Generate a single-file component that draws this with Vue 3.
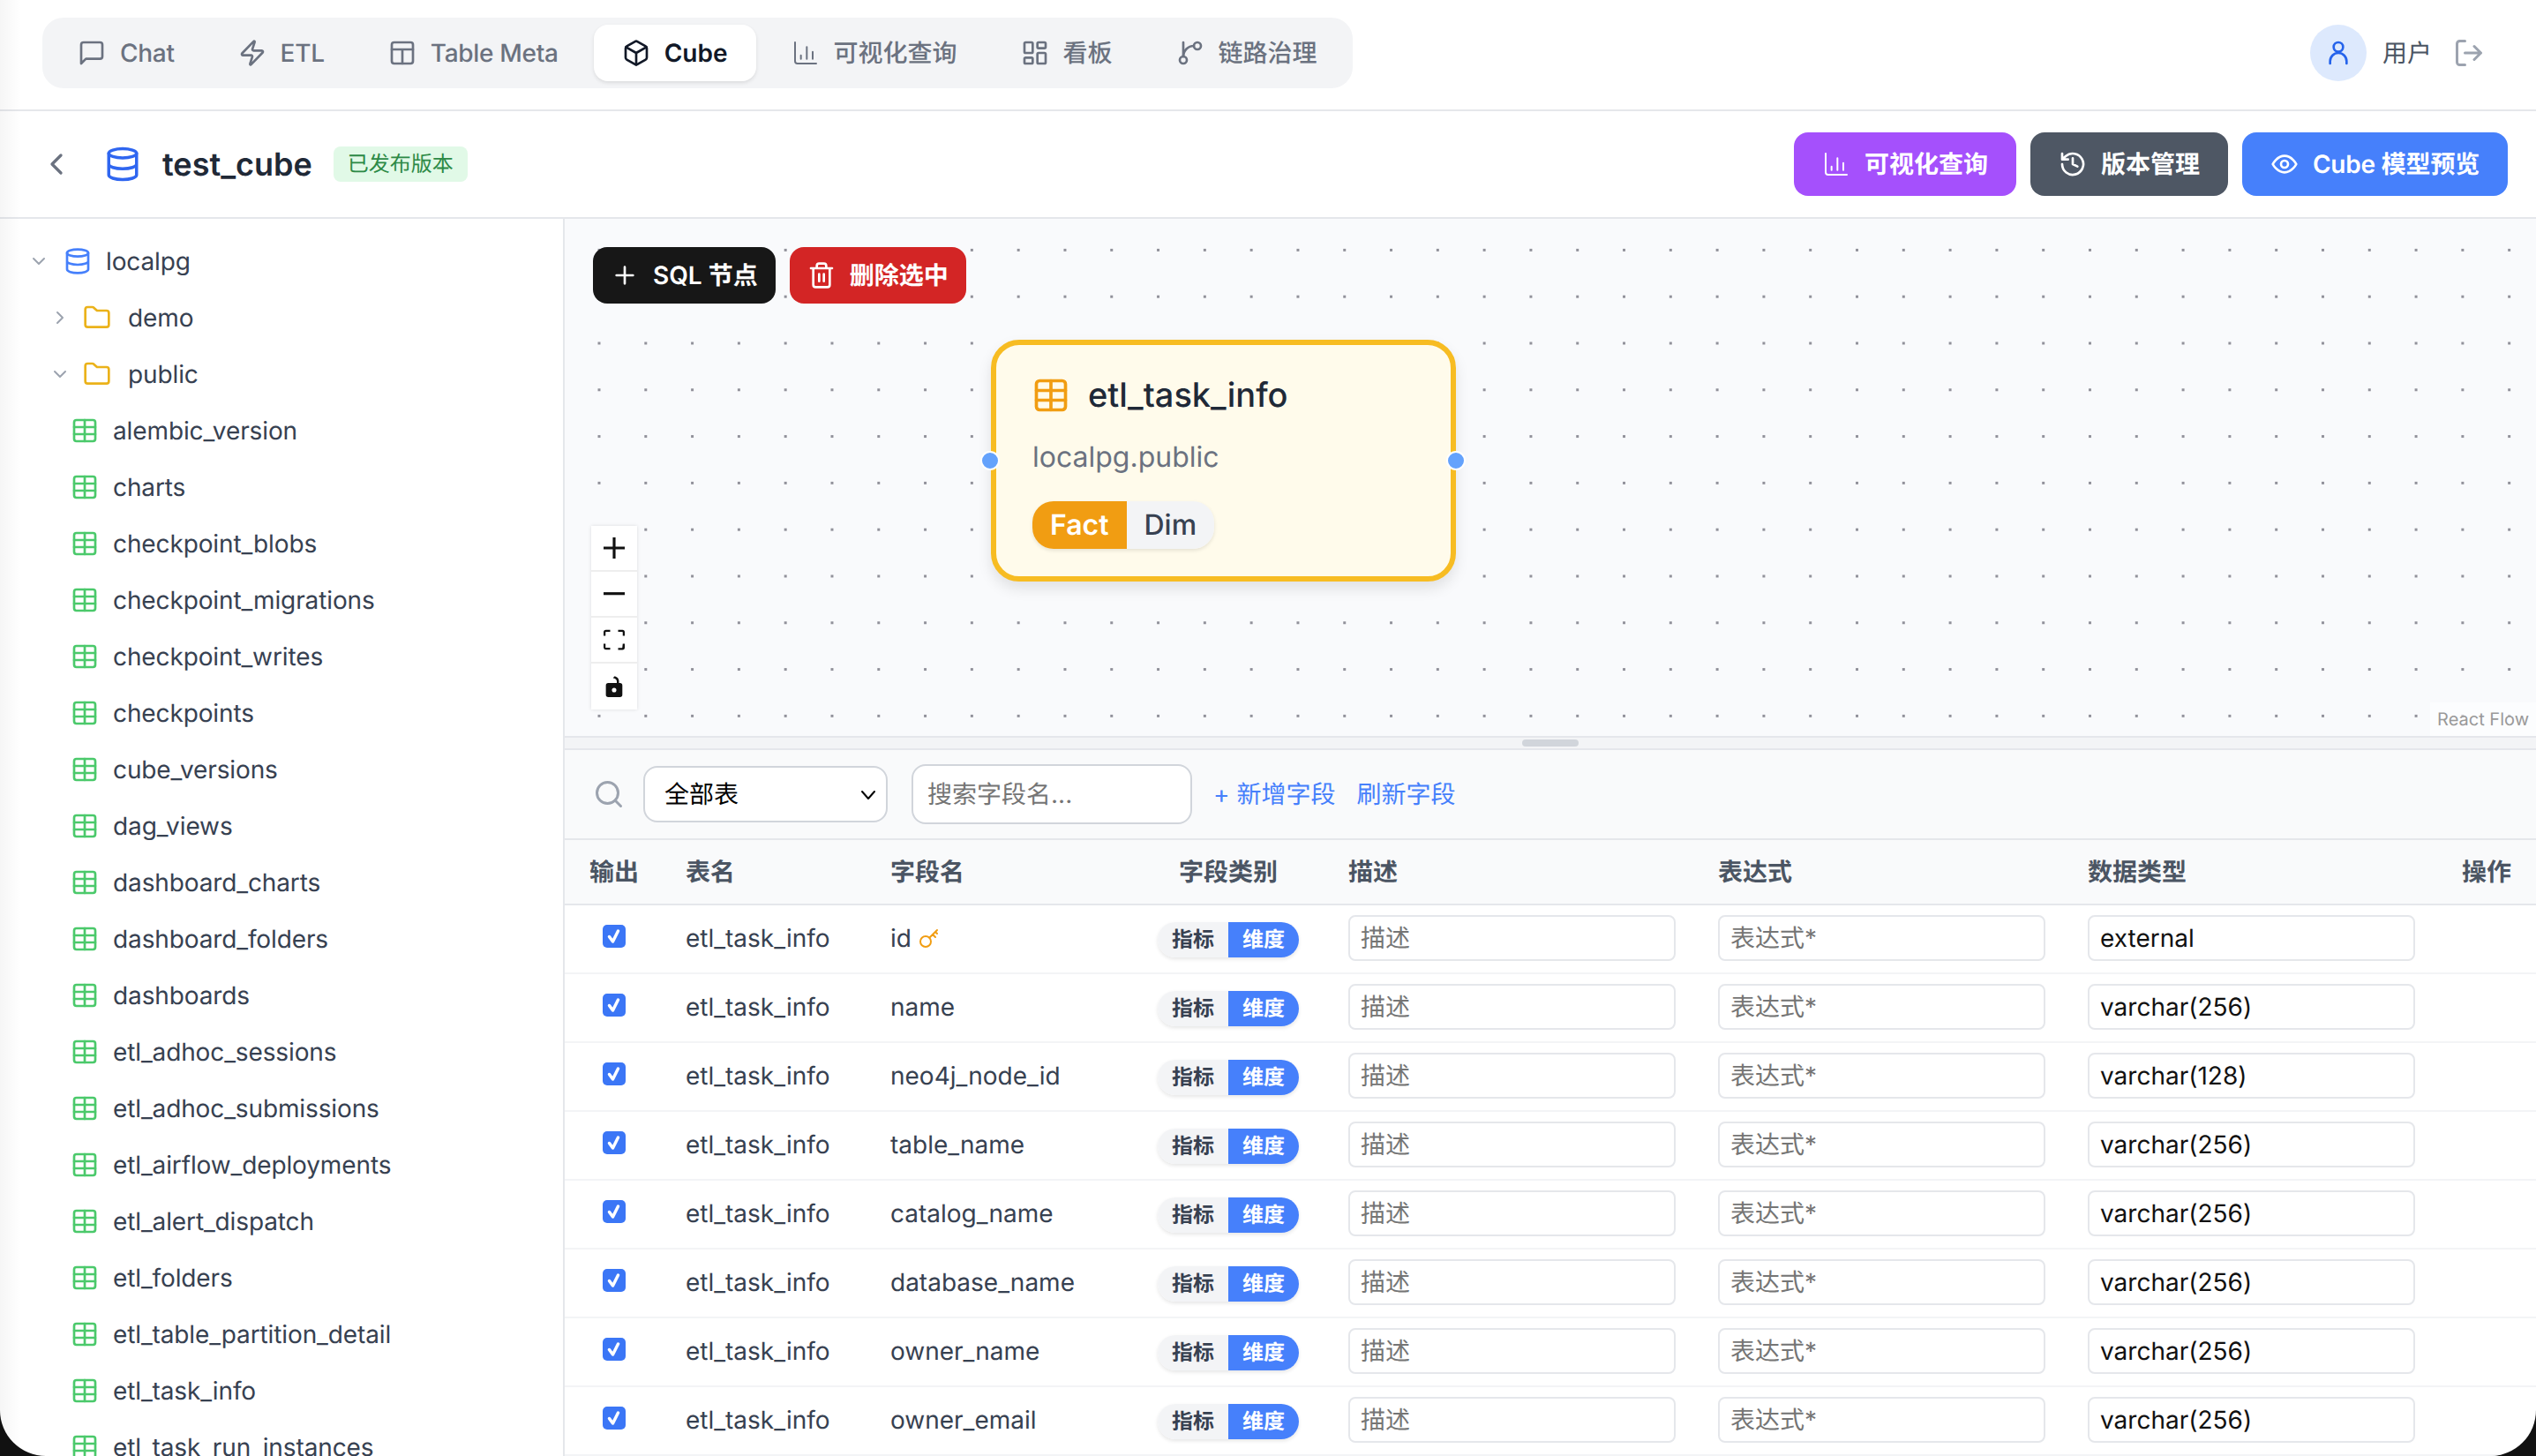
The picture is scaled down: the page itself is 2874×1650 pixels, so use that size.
<script setup>
const tabs = [
  { name: 'Chat', icon: 'chat', latin: true },
  { name: 'ETL', icon: 'bolt', latin: true },
  { name: 'Table Meta', icon: 'layout', latin: true },
  { name: 'Cube', icon: 'cube', active: true },
  { name: '可视化查询', icon: 'chart' },
  { name: '看板', icon: 'grid' },
  { name: '链路治理', icon: 'branch' }
]

const tables = [
  'alembic_version', 'charts', 'checkpoint_blobs', 'checkpoint_migrations', 'checkpoint_writes',
  'checkpoints', 'cube_versions', 'dag_views', 'dashboard_charts', 'dashboard_folders', 'dashboards',
  'etl_adhoc_sessions', 'etl_adhoc_submissions', 'etl_airflow_deployments', 'etl_alert_dispatch',
  'etl_folders', 'etl_table_partition_detail', 'etl_task_info', 'etl_task_run_instances'
]

const fields = [
  { name: 'id', type: 'external', key: true },
  { name: 'name', type: 'varchar(256)' },
  { name: 'neo4j_node_id', type: 'varchar(128)' },
  { name: 'table_name', type: 'varchar(256)' },
  { name: 'catalog_name', type: 'varchar(256)' },
  { name: 'database_name', type: 'varchar(256)' },
  { name: 'owner_name', type: 'varchar(256)' },
  { name: 'owner_email', type: 'varchar(256)' }
]
</script>

<template>
  <div class="window">
    <i class="edge"></i>
    <header class="topbar">
      <nav class="tabs">
        <div v-for="tab in tabs" :key="tab.name" class="tab" :class="{ active: tab.active, latin: tab.latin }">
          <svg class="ico" viewBox="0 0 24 24">
            <path v-if="tab.icon === 'chat'" d="M21 15a2 2 0 0 1-2 2H7l-4 4V5a2 2 0 0 1 2-2h14a2 2 0 0 1 2 2z" />
            <path v-if="tab.icon === 'bolt'" d="M4 14a1 1 0 0 1-.78-1.63l9.9-10.2a.5.5 0 0 1 .86.46l-1.92 6.02A1 1 0 0 0 13 10h7a1 1 0 0 1 .78 1.63l-9.9 10.2a.5.5 0 0 1-.86-.46l1.92-6.02A1 1 0 0 0 11 14z" />
            <g v-if="tab.icon === 'layout'">
              <rect x="3" y="3" width="18" height="18" rx="2" />
              <path d="M3 9h18M12 9v12" />
            </g>
            <g v-if="tab.icon === 'cube'">
              <path d="M21 16V8a2 2 0 0 0-1-1.7l-7-4a2 2 0 0 0-2 0l-7 4A2 2 0 0 0 3 8v8a2 2 0 0 0 1 1.7l7 4a2 2 0 0 0 2 0l7-4a2 2 0 0 0 1-1.7z" />
              <path d="M3.3 7 12 12l8.7-5M12 22V12" />
            </g>
            <path v-if="tab.icon === 'chart'" class="thin" d="M3 3v16a2 2 0 0 0 2 2h16M8 17v-3M13 17V7M18 17V11" />
            <g v-if="tab.icon === 'grid'">
              <rect x="3" y="3" width="7" height="9" rx="1" />
              <rect x="14" y="3" width="7" height="5" rx="1" />
              <rect x="14" y="12" width="7" height="9" rx="1" />
              <rect x="3" y="16" width="7" height="5" rx="1" />
            </g>
            <g v-if="tab.icon === 'branch'">
              <path d="M6 3v12" />
              <circle cx="18" cy="6" r="3" />
              <circle cx="6" cy="18" r="3" />
              <path d="M15 6a9 9 0 0 0-9 9" />
            </g>
          </svg>
          <span>{{ tab.name }}</span>
        </div>
      </nav>
      <div class="user">
        <span class="avatar">
          <svg viewBox="0 0 24 24"><circle cx="12" cy="7" r="4" /><path d="M5 21v-2a7 7 0 0 1 14 0v2" /></svg>
        </span>
        <span class="user-name">用户</span>
        <svg class="logout" viewBox="0 0 24 24"><path d="M9 21H5a2 2 0 0 1-2-2V5a2 2 0 0 1 2-2h4M16 17l5-5-5-5M21 12H9" /></svg>
      </div>
    </header>

    <div class="titlebar">
      <svg class="back" viewBox="0 0 24 24"><path d="m15 18-6-6 6-6" /></svg>
      <svg class="title-db" viewBox="0 0 24 24">
        <ellipse cx="12" cy="5" rx="9" ry="3" />
        <path d="M3 5v14c0 1.7 4 3 9 3s9-1.3 9-3V5M3 12c0 1.7 4 3 9 3s9-1.3 9-3" />
      </svg>
      <h1>test_cube</h1>
      <span class="badge">已发布版本</span>
      <div class="actions">
        <button class="act purple">
          <svg class="ico" viewBox="0 0 24 24"><path class="thin" d="M3 3v16a2 2 0 0 0 2 2h16M8 17v-3M13 17V7M18 17V11" /></svg>
          可视化查询
        </button>
        <button class="act slate">
          <svg class="ico" viewBox="0 0 24 24"><path d="M3 12a9 9 0 1 0 3-6.7L3 8M3 3v5h5M12 7v5l4 2" /></svg>
          版本管理
        </button>
        <button class="act blue">
          <svg class="ico" viewBox="0 0 24 24"><path d="M2 12s3.6-7 10-7 10 7 10 7-3.6 7-10 7-10-7-10-7z" /><circle cx="12" cy="12" r="3" /></svg>
          Cube 模型预览
        </button>
      </div>
    </div>

    <div class="body">
      <aside class="tree">
        <div class="row lvl0">
          <svg class="caret" viewBox="0 0 24 24"><path d="m6 9 6 6 6-6" /></svg>
          <svg class="db" viewBox="0 0 24 24">
            <ellipse cx="12" cy="5" rx="9" ry="3" />
            <path d="M3 5v14c0 1.7 4 3 9 3s9-1.3 9-3V5M3 12c0 1.7 4 3 9 3s9-1.3 9-3" />
          </svg>
          <span>localpg</span>
        </div>
        <div class="row lvl1">
          <svg class="caret" viewBox="0 0 24 24"><path d="m9 18 6-6-6-6" /></svg>
          <svg class="folder" viewBox="0 0 24 24"><path d="M20 20a2 2 0 0 0 2-2V8a2 2 0 0 0-2-2h-8L9.600 3.900A2 2 0 0 0 8.100 3H4a2 2 0 0 0-2 2v13a2 2 0 0 0 2 2z" /></svg>
          <span>demo</span>
        </div>
        <div class="row lvl1">
          <svg class="caret" viewBox="0 0 24 24"><path d="m6 9 6 6 6-6" /></svg>
          <svg class="folder" viewBox="0 0 24 24"><path d="M20 20a2 2 0 0 0 2-2V8a2 2 0 0 0-2-2h-8L9.600 3.900A2 2 0 0 0 8.100 3H4a2 2 0 0 0-2 2v13a2 2 0 0 0 2 2z" /></svg>
          <span>public</span>
        </div>
        <div v-for="t in tables" :key="t" class="row lvl2">
          <svg class="tbl" viewBox="0 0 24 24">
            <rect x="3" y="3" width="18" height="18" rx="2" />
            <path d="M3 9h18M3 15h18M12 3v18" />
          </svg>
          <span>{{ t }}</span>
        </div>
      </aside>

      <main class="content">
        <section class="canvas">
          <div class="canvas-tools">
            <button class="tool dark">
              <svg class="ico" viewBox="0 0 24 24"><path d="M5 12h14M12 5v14" /></svg>
              SQL 节点
            </button>
            <button class="tool red">
              <svg class="ico" viewBox="0 0 24 24"><path d="M3 6h18M19 6v14a2 2 0 0 1-2 2H7a2 2 0 0 1-2-2V6M8 6V4a2 2 0 0 1 2-2h4a2 2 0 0 1 2 2v2M10 11v6M14 11v6" /></svg>
              删除选中
            </button>
          </div>

          <div class="node">
            <i class="handle left"></i>
            <i class="handle right"></i>
            <div class="node-title">
              <svg viewBox="0 0 24 24">
                <rect x="3" y="3" width="18" height="18" rx="2" />
                <path d="M3 9h18M3 15h18M12 3v18" />
              </svg>
              etl_task_info
            </div>
            <div class="node-sub">localpg.public</div>
            <div class="node-switch">
              <span class="on">Fact</span>
              <span>Dim</span>
            </div>
          </div>

          <div class="controls">
            <button>
              <svg viewBox="0 0 32 32"><path d="M32 18.100H18.100V32h-4.200V18.100H0v-4.200h13.900V0h4.200v13.900H32z" /></svg>
            </button>
            <button>
              <svg viewBox="0 0 32 5"><path d="M0 0h32v4.200H0z" /></svg>
            </button>
            <button>
              <svg viewBox="0 0 32 30"><path d="M3.700 27.300a1 1 0 0 1-.7-.7V21H0v5.600A3.700 3.700 0 0 0 3.700 30H10v-3H3.700zM28.300 27a1 1 0 0 1-.3.3H22v3h6a3.700 3.700 0 0 0 4-3.700V21h-3zM28 0h-6v3h6a1 1 0 0 1 1 .7V9h3V3.700A3.700 3.700 0 0 0 28 0zM0 3.700V9h3V3.700A1 1 0 0 1 3.700 3H10V0H3.700A3.700 3.700 0 0 0 0 3.700z" /></svg>
            </button>
            <button>
              <svg viewBox="0 0 25 32"><path d="M21.300 10.700h-1.500V7.600c-.1-3.800-3.300-6.900-7.100-6.900l-1.900 2.500c2.900 0 5.300 1.900 5.700 4.500v3H3.600A3.600 3.600 0 0 0 0 14.300v14.100A3.600 3.600 0 0 0 3.600 32h17.700a3.600 3.600 0 0 0 3.600-3.600V14.300a3.600 3.600 0 0 0-3.600-3.600zM12.500 24.700a3.400 3.400 0 1 1 0-6.800 3.400 3.400 0 0 1 0 6.800z" /></svg>
            </button>
          </div>

          <div class="attribution">React Flow</div>
        </section>

        <div class="resizer"><i></i></div>

        <section class="toolbar">
          <svg class="search-ico" viewBox="0 0 24 24"><circle cx="11" cy="11" r="8" /><path d="m21 21-4.300-4.300" /></svg>
          <div class="select">
            <span>全部表</span>
            <svg viewBox="0 0 24 24"><path d="m5 9 7 8 7-8" /></svg>
          </div>
          <input class="search" placeholder="搜索字段名..." />
          <a class="link add">+ 新增字段</a>
          <a class="link">刷新字段</a>
        </section>

        <table class="grid">
          <colgroup>
            <col class="c-out" />
            <col class="c-table" />
            <col class="c-field" />
            <col class="c-kind" />
            <col class="c-input" />
            <col class="c-input" />
            <col class="c-input" />
            <col />
          </colgroup>
          <thead>
            <tr>
              <th>输出</th>
              <th>表名</th>
              <th>字段名</th>
              <th class="center">字段类别</th>
              <th>描述</th>
              <th>表达式</th>
              <th>数据类型</th>
              <th class="right">操作</th>
            </tr>
          </thead>
          <tbody>
            <tr v-for="f in fields" :key="f.name">
              <td>
                <span class="check">
                  <svg viewBox="0 0 26 26"><path d="m7.500 13.500 4 5.500 6-12" /></svg>
                </span>
              </td>
              <td>etl_task_info</td>
              <td>
                <span class="field-name">
                  {{ f.name }}
                  <svg v-if="f.key" class="key" viewBox="0 0 24 24">
                    <circle cx="8" cy="16" r="6" />
                    <path d="M12.500 11.500 21 3M16 8l3 3M19 5l2 2" />
                  </svg>
                </span>
              </td>
              <td class="center">
                <div class="kind">
                  <span>指标</span>
                  <span class="on">维度</span>
                </div>
              </td>
              <td><input class="cell" placeholder="描述" /></td>
              <td><input class="cell" placeholder="表达式*" /></td>
              <td><input class="cell" :value="f.type" /></td>
              <td></td>
            </tr>
          </tbody>
        </table>
      </main>
    </div>
  </div>
</template>

<style>
html, body {
  margin: 0;
  background: #111;
}
</style>

<style scoped>
* {
  box-sizing: border-box;
}
.window {
  width: 2874px;
  height: 1650px;
  overflow: hidden;
  display: flex;
  flex-direction: column;
  position: relative;
  background: #fff;
  border-radius: 0 0 52px 52px;
  font-family: Inter, "Noto Sans CJK SC", sans-serif;
  font-size: 28px;
  line-height: 1.5;
  text-rendering: geometricPrecision;
  color: #374151;
}
.edge {
  position: absolute;
  left: 0;
  top: 0;
  bottom: 0;
  width: 24px;
  background: linear-gradient(90deg, rgba(0, 0, 0, 0.035), transparent);
  pointer-events: none;
}
svg {
  fill: none;
  stroke: currentColor;
  stroke-width: 2;
  stroke-linecap: round;
  stroke-linejoin: round;
  flex-shrink: 0;
}
.ico {
  width: 32px;
  height: 32px;
}
.thin {
  stroke-width: 1.5;
}
button {
  border: none;
  font-family: inherit;
  line-height: inherit;
  text-rendering: inherit;
  cursor: pointer;
}
input {
  line-height: inherit;
  text-rendering: inherit;
}

/* top nav */
.topbar {
  height: 126px;
  flex-shrink: 0;
  display: flex;
  align-items: center;
  justify-content: space-between;
  padding: 0 48px 4px;
  border-bottom: 2px solid #e5e7eb;
}
.tabs {
  height: 80px;
  display: flex;
  align-items: center;
  gap: 8px;
  padding: 0 8px;
  background: #f3f4f6;
  border-radius: 24px;
}
.tab {
  height: 64px;
  display: flex;
  align-items: center;
  gap: 16px;
  padding: 0 32px;
  border-radius: 16px;
  font-weight: 500;
  color: #6b7280;
}
.tab.latin {
  letter-spacing: -0.3px;
}
.tab.active {
  background: #fff;
  color: #111827;
  font-weight: 600;
  box-shadow: 0 2px 4px rgba(0, 0, 0, 0.1);
}
.user {
  display: flex;
  align-items: center;
  height: 64px;
  margin-right: 10px;
}
.avatar {
  width: 64px;
  height: 64px;
  border-radius: 50%;
  background: #dde9fd;
  color: #2563eb;
  display: flex;
  align-items: center;
  justify-content: center;
  margin-right: 18px;
}
.avatar svg {
  width: 32px;
  height: 32px;
}
.user-name {
  color: #4b5563;
  margin-right: 24px;
}
.logout {
  width: 36px;
  height: 36px;
  color: #9ca3af;
}

/* second bar */
.titlebar {
  height: 122px;
  flex-shrink: 0;
  display: flex;
  align-items: center;
  padding: 0 32px 0 44px;
  border-bottom: 2px solid #e5e7eb;
}
.back {
  width: 40px;
  height: 40px;
  color: #6b7280;
  margin-right: 34px;
}
.title-db {
  width: 42px;
  height: 42px;
  color: #2f66f0;
  margin-right: 24px;
}
h1 {
  margin: 0 24px 0 0;
  font-size: 36px;
  font-weight: 600;
  color: #1f2937;
}
.badge {
  height: 40px;
  padding: 0 16px;
  display: flex;
  align-items: center;
  border-radius: 8px;
  background: #e1f9e7;
  color: #2d8a46;
  font-size: 24px;
}
.actions {
  margin-left: auto;
  display: flex;
  gap: 16px;
}
.act {
  height: 72px;
  display: flex;
  align-items: center;
  gap: 16px;
  padding: 0 32px;
  border-radius: 16px;
  color: #fff;
  font-size: 28px;
  font-weight: 600;
}
.purple { background: #a550fc; }
.slate { background: #4e5764; }
.blue {
  background: #4680fb;
  letter-spacing: -0.2px;
}

/* main */
.body {
  flex: 1;
  min-height: 0;
  display: flex;
}
.tree {
  width: 640px;
  flex-shrink: 0;
  overflow: hidden;
  border-right: 2px solid #e5e7eb;
  padding-top: 16px;
  letter-spacing: -0.12px;
}
.row {
  height: 64px;
  display: flex;
  align-items: center;
  white-space: nowrap;
}
.caret {
  width: 24px;
  height: 24px;
  color: #9ca3af;
}
.lvl0 {
  padding-left: 32px;
  gap: 16px;
}
.lvl0 .db {
  width: 32px;
  height: 32px;
  color: #4680fb;
}
.lvl1 {
  padding-left: 56px;
  gap: 14px;
}
.lvl1 .folder {
  width: 32px;
  height: 32px;
  color: #ebb21a;
}
.lvl1 span {
  margin-left: 5px;
}
.lvl2 {
  padding-left: 80px;
  gap: 16px;
}
.tbl {
  width: 32px;
  height: 32px;
  color: #4bc96b;
}
.content {
  flex: 1;
  min-width: 0;
  display: flex;
  flex-direction: column;
}

/* canvas */
.canvas {
  height: 586px;
  flex-shrink: 0;
  position: relative;
  background-color: #f9fafc;
  background-image: radial-gradient(#91919a 1.5px, transparent 1.8px);
  background-size: 52.8px 52.8px;
  background-position: 12.6px 9px;
}
.canvas-tools {
  position: absolute;
  left: 32px;
  top: 32px;
  display: flex;
  gap: 16px;
}
.tool {
  height: 64px;
  display: flex;
  align-items: center;
  gap: 16px;
  padding: 0 20px;
  border-radius: 16px;
  color: #fff;
  font-size: 28px;
  font-weight: 600;
}
.dark { background: #171717; }
.red { background: #d32525; }
.node {
  position: absolute;
  left: 483px;
  top: 137px;
  width: 527px;
  height: 274px;
  padding: 35px 41px 0;
  background: #fffbeb;
  border: 6px solid #f7bc22;
  border-radius: 32px;
  box-shadow: 0 8px 16px rgba(0, 0, 0, 0.1);
}
.node-title {
  display: flex;
  align-items: center;
  gap: 20px;
  height: 44px;
  font-size: 38px;
  font-weight: 500;
  color: #1f2937;
}
.node-title svg {
  width: 44px;
  height: 44px;
  color: #f19d12;
  margin-left: -1px;
}
.node-sub {
  margin-top: 26px;
  font-size: 32px;
  line-height: 44px;
  color: #6b7280;
}
.node-switch {
  margin-top: 28px;
  display: inline-flex;
  height: 54px;
  border-radius: 24px;
  overflow: hidden;
  font-size: 32px;
  box-shadow: 0 2px 4px rgba(0, 0, 0, 0.1);
}
.node-switch span {
  display: flex;
  align-items: center;
  padding: 0 20px;
  background: #f3f4f6;
  color: #374151;
  font-weight: 500;
}
.node-switch .on {
  background: #f19d12;
  color: #fff;
  font-weight: 600;
}
.handle {
  position: absolute;
  top: 120px;
  width: 22px;
  height: 22px;
  border-radius: 50%;
  background: #64a2fc;
  border: 2px solid #fff;
}
.handle.left { left: -18px; }
.handle.right { right: -17px; }
.controls {
  position: absolute;
  left: 30px;
  top: 348px;
  width: 52px;
  display: flex;
  flex-direction: column;
  box-shadow: 0 0 4px rgba(0, 0, 0, 0.12);
}
.controls button {
  height: 52px;
  padding: 0;
  background: #fff;
  border-bottom: 2px solid #eeeeee;
  display: flex;
  align-items: center;
  justify-content: center;
}
.controls button:last-child {
  border-bottom: none;
}
.controls svg {
  width: 24px;
  height: 24px;
  fill: #111;
  stroke: none;
}
.attribution {
  position: absolute;
  right: 0;
  bottom: 0;
  height: 38px;
  padding: 0 8px;
  display: flex;
  align-items: center;
  background: rgba(255, 255, 255, 0.5);
  color: #999;
  font-size: 20px;
}

/* resizer */
.resizer {
  height: 16px;
  flex-shrink: 0;
  background: #f3f4f6;
  border-top: 2px solid #e5e7eb;
  border-bottom: 2px solid #e5e7eb;
  display: flex;
  align-items: center;
  justify-content: center;
}
.resizer i {
  width: 64px;
  height: 8px;
  border-radius: 4px;
  background: #d1d5db;
}

/* toolbar */
.toolbar {
  height: 102px;
  flex-shrink: 0;
  display: flex;
  align-items: center;
  padding: 0 0 0 32px;
  background: #f9fafb;
  border-bottom: 2px solid #e5e7eb;
}
.search-ico {
  width: 36px;
  height: 36px;
  color: #9ca3af;
  margin-right: 21px;
}
.select {
  width: 277px;
  height: 64px;
  display: flex;
  align-items: center;
  justify-content: space-between;
  padding: 0 8px 0 22px;
  background: #fff;
  border: 2px solid #d1d5db;
  border-radius: 16px;
  color: #000;
}
.select svg {
  width: 24px;
  height: 24px;
}
.search {
  width: 318px;
  height: 68px;
  margin: 0 24px 0 27px;
  padding: 0 16px;
  background: #fff;
  border: 2px solid #d1d5db;
  border-radius: 16px;
  outline: none;
  font-family: inherit;
  font-size: 28px;
}
.link {
  color: #4680fb;
}
.add {
  margin-right: 24px;
}

/* table */
.grid {
  width: 2234px;
  table-layout: fixed;
  border-collapse: separate;
  border-spacing: 0;
}
.c-out { width: 109px; }
.c-table { width: 232px; }
.c-field { width: 303px; }
.c-kind { width: 216px; }
.c-input { width: 419px; }
.grid th {
  height: 74px;
  padding: 0 0 0 28px;
  text-align: left;
  font-size: 28px;
  font-weight: 600;
  color: #4b5563;
  background: #f9fafb;
  border-bottom: 2px solid #e5e7eb;
}
.grid td {
  height: 78px;
  padding: 0 0 2px 28px;
  white-space: nowrap;
  border-bottom: 2px solid #f3f4f6;
}
.grid .center {
  text-align: center;
  padding-right: 28px;
}
.grid .right {
  text-align: right;
  padding-right: 28px;
}
.check {
  display: block;
  width: 26px;
  height: 26px;
  margin: -4px 0 0 15px;
  border-radius: 5px;
  background: #3b76f6;
  color: #fff;
}
.check svg {
  display: block;
  width: 26px;
  height: 26px;
  stroke-width: 3.5;
}
.field-name {
  display: inline-flex;
  align-items: center;
  gap: 8px;
}
.key {
  width: 24px;
  height: 24px;
  color: #f19d12;
}
.kind {
  display: inline-flex;
  vertical-align: middle;
  height: 40px;
  border-radius: 20px;
  overflow: hidden;
  font-size: 24px;
  font-weight: 600;
  box-shadow: 0 2px 4px rgba(0, 0, 0, 0.1);
}
.kind span {
  display: flex;
  align-items: center;
  padding: 0 16px;
  background: #f3f4f6;
  color: #374151;
}
.kind .on {
  background: #4680fb;
  color: #fff;
}
.cell {
  display: block;
  width: 371px;
  height: 52px;
  padding: 0 12px;
  background: #fff;
  border: 2px solid #e5e7eb;
  border-radius: 8px;
  outline: none;
  font-family: inherit;
  font-size: 28px;
  color: #111;
}
</style>
